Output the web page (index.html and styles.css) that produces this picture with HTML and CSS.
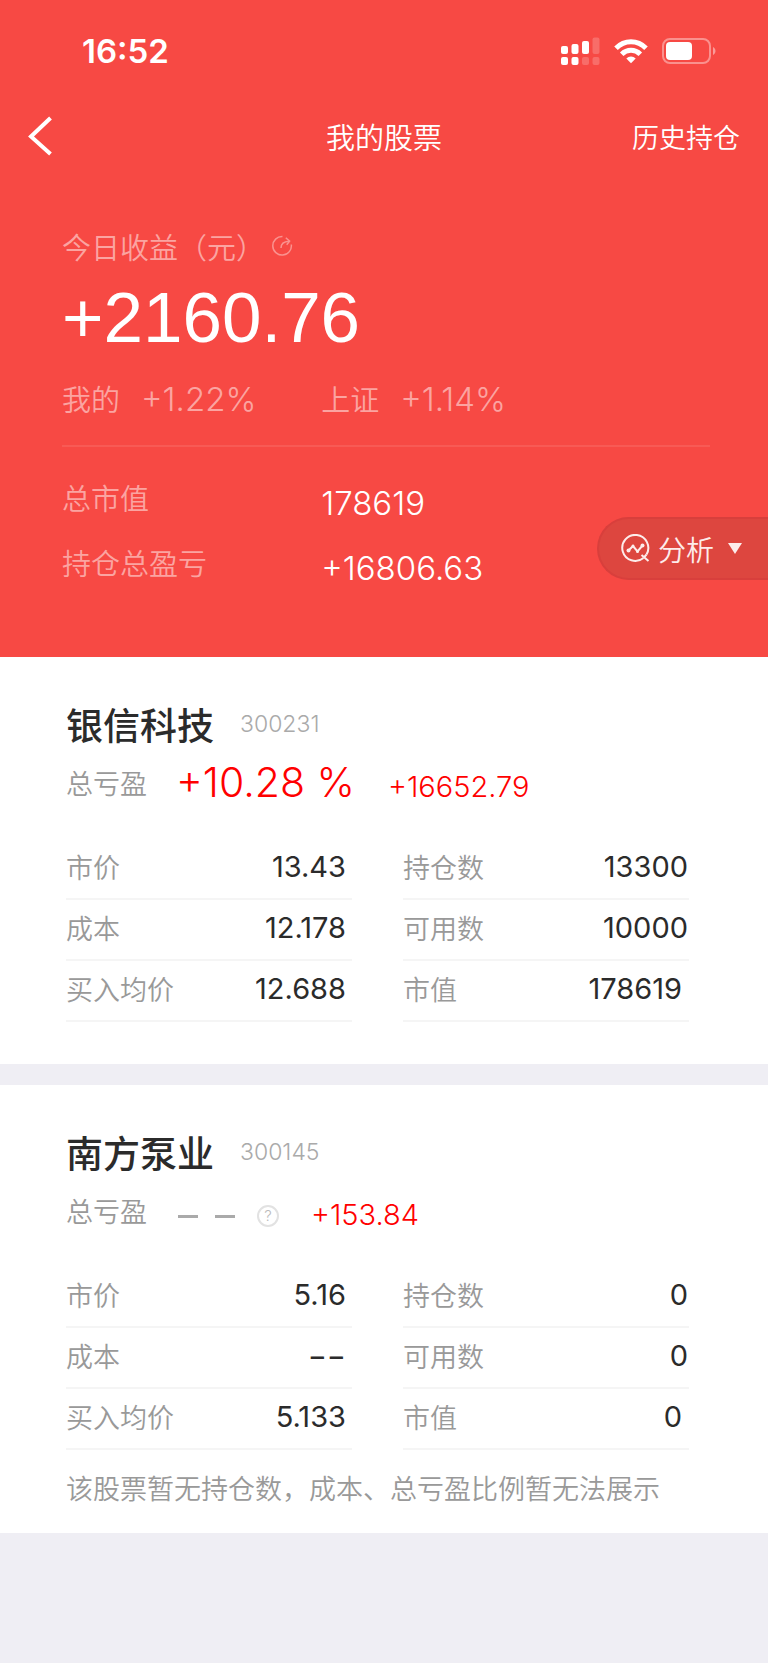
FILE: index.html
```html
<!DOCTYPE html>
<html lang="zh-CN">
<head>
    <meta charset="UTF-8">
    <meta name="viewport" content="width=device-width, initial-scale=1.0">
    <title>我的股票</title>
    <link rel="stylesheet" href="styles.css">
</head>
<body>
    <header class="header">
        <!-- Status bar -->
        <div class="status">
            <span class="time">16:52</span>
            <div class="status-icons">
                <svg width="39" height="28" viewBox="0 0 39 28" fill="#fff">
                    <rect x="0" y="9" width="7" height="8" rx="2"/>
                    <rect x="10.500" y="7" width="7" height="10" rx="2"/>
                    <rect x="21" y="4" width="7" height="13" rx="2"/>
                    <rect x="31.500" y="0.500" width="7" height="16.500" rx="2" opacity="0.200"/>
                    <rect x="0" y="20" width="7" height="8" rx="2"/>
                    <rect x="10.500" y="20" width="7" height="8" rx="2"/>
                    <rect x="21" y="20" width="7" height="8" rx="2" opacity="0.200"/>
                    <rect x="31.500" y="20" width="7" height="8" rx="2" opacity="0.200"/>
                </svg>
                <svg width="34" height="25" viewBox="0 0 34 25" fill="none" stroke="#fff" stroke-width="5">
                    <path d="M2 9.300C10.500 0.700 23.500 0.700 32 9.300"/>
                    <path d="M7.700 15.200C13 10 21 10 26.300 15.200"/>
                    <path d="M12.300 19.400C15 16.700 19 16.700 21.700 19.400L17 24.300Z" fill="#fff" stroke="none"/>
                </svg>
                <svg width="54" height="26" viewBox="0 0 54 26">
                    <rect x="1" y="1" width="47" height="24" rx="7" fill="none" stroke="#fff" stroke-width="2" opacity="0.400"/>
                    <rect x="4" y="4" width="26" height="18" rx="4" fill="#fff"/>
                    <path d="M51 9C54.300 10.500 54.300 15.500 51 17Z" fill="#fff" opacity="0.450"/>
                </svg>
            </div>
        </div>

        <nav class="nav">
            <button class="back" aria-label="返回">
                <svg width="24" height="40" viewBox="0 0 24 40" fill="none" stroke="#fff" stroke-width="4">
                    <path d="M22.500 2L3 20.500L22.500 38"/>
                </svg>
            </button>
            <h1 class="nav-title">我的股票</h1>
            <a class="history" href="#">历史持仓</a>
        </nav>

        <!-- Profit of the day and totals -->
        <section class="summary">
            <div class="today">
                <span>今日收益（元）</span>
                <button class="refresh" aria-label="刷新">
                    <svg width="22" height="22" viewBox="0 0 22 22" fill="none" stroke="#fff" stroke-width="1.500">
                        <path d="M11.500 1.500A9.300 9.300 0 1 0 20.300 9.500"/>
                        <path d="M10 13C10 9 12 6.500 18 6.200"/>
                        <path d="M14.800 2.800L18.600 6.100L15.700 9.700"/>
                    </svg>
                </button>
            </div>
            <div class="profit">+2160.76</div>
            <div class="columns compare">
                <div><span>我的</span><span class="rate">+1.22%</span></div>
                <div><span>上证</span><span class="rate">+1.14%</span></div>
            </div>
            <dl class="totals">
                <div class="columns">
                    <dt>总市值</dt>
                    <dd>178619</dd>
                </div>
                <div class="columns">
                    <dt>持仓总盈亏</dt>
                    <dd>+16806.63</dd>
                </div>
            </dl>
        </section>

        <!-- Floating tab on the right edge -->
        <button class="analysis">
            <svg width="29" height="29" viewBox="0 0 29 29" fill="none" stroke="#fdeceb" stroke-width="2">
                <path d="M22.500 24A13 13 0 1 1 25.500 20.500"/>
                <path d="M20.500 21L27.500 27M25.500 20.500L22.500 24"/>
                <path d="M7.500 16.500L12 12L16.500 17.500L21.500 11.500"/>
                <g fill="#fdeceb" stroke="none">
                    <circle cx="7.500" cy="16.500" r="2"/>
                    <circle cx="12" cy="12" r="1.500"/>
                    <circle cx="16.500" cy="17.500" r="1.500"/>
                    <circle cx="21.500" cy="11.500" r="2"/>
                </g>
            </svg>
            <span>分析</span>
            <svg class="arrow" width="14" height="11" viewBox="0 0 14 11" fill="#fdeceb">
                <path d="M0 0H14L7 11Z"/>
            </svg>
        </button>
    </header>

    <main>
        <article class="stock">
            <div class="stock-head">
                <h2 class="name">银信科技</h2>
                <span class="code">300231</span>
            </div>
            <div class="result">
                <span class="label">总亏盈</span>
                <span class="percent">+10.28 %</span>
                <span class="amount">+16652.79</span>
            </div>
            <dl class="details">
                <div class="item"><dt>市价</dt><dd>13.43</dd></div>
                <div class="item"><dt>持仓数</dt><dd>13300</dd></div>
                <div class="item"><dt>成本</dt><dd>12.178</dd></div>
                <div class="item"><dt>可用数</dt><dd>10000</dd></div>
                <div class="item"><dt>买入均价</dt><dd>12.688</dd></div>
                <div class="item value"><dt>市值</dt><dd>178619</dd></div>
            </dl>
        </article>

        <article class="stock">
            <div class="stock-head">
                <h2 class="name">南方泵业</h2>
                <span class="code">300145</span>
            </div>
            <div class="result">
                <span class="label">总亏盈</span>
                <span class="dashes" role="img" aria-label="暂无"></span>
                <button class="help" aria-label="说明">?</button>
                <span class="amount">+153.84</span>
            </div>
            <dl class="details">
                <div class="item"><dt>市价</dt><dd>5.16</dd></div>
                <div class="item"><dt>持仓数</dt><dd>0</dd></div>
                <div class="item"><dt>成本</dt><dd>−−</dd></div>
                <div class="item"><dt>可用数</dt><dd>0</dd></div>
                <div class="item"><dt>买入均价</dt><dd>5.133</dd></div>
                <div class="item value"><dt>市值</dt><dd>0</dd></div>
            </dl>
            <p class="note">该股票暂无持仓数，成本、总亏盈比例暂无法展示</p>
        </article>
    </main>
</body>
</html>
```
FILE: styles.css
```css
* {
    box-sizing: border-box;
}

body, h1, h2, dl, dd, p {
    margin: 0;
}

body {
    font-family: Inter, "Noto Sans CJK SC", sans-serif;
    font-weight: 350;
    background-color: #efeef4;
}

button {
    padding: 0;
    border: none;
    background: none;
    font: inherit;
    color: inherit;
    cursor: pointer;
}

svg {
    display: block;
    flex-shrink: 0;
}

/* Red header */
.header {
    position: relative;
    padding-bottom: 60px;
    background-color: #f74944;
    color: #fff;
}

.status {
    display: flex;
    justify-content: space-between;
    align-items: center;
    height: 102px;
    padding: 0 52px 0 82px;
}

.time {
    font-size: 33px;
    font-weight: 600;
}

.status-icons {
    display: flex;
    align-items: center;
    gap: 14px;
}

.nav {
    display: grid;
    grid-template-columns: 1fr auto 1fr;
    align-items: center;
    height: 68px;
    padding: 0 28px;
}

.back {
    justify-self: start;
}

.nav-title {
    font-size: 29px;
    font-weight: 350;
}

.history {
    justify-self: end;
    font-size: 27px;
    color: #fff;
    text-decoration: none;
}

.summary {
    padding: 56px 58px 0 62px;
}

.today {
    display: flex;
    align-items: center;
    gap: 6px;
    height: 40px;
    font-size: 29px;
    color: #fba4a1;
}

.refresh {
    opacity: 0.4;
}

.profit {
    margin-top: 12px;
    font-family: "Liberation Sans", Arial, sans-serif;
    font-size: 71px;
    font-weight: 400;
    line-height: 80px;
}

.columns {
    display: grid;
    grid-template-columns: 2fr 3fr;
}

.compare {
    margin-top: 21px;
    padding-bottom: 24px;
    border-bottom: 2px solid #f85a55;
    line-height: 40px;
    font-size: 29px;
    color: #fba4a1;
}

.rate {
    margin-left: 21px;
    font-size: 33px;
    font-weight: 300;
}

.totals {
    padding-top: 20px;
}

.totals .columns {
    height: 65px;
    line-height: 65px;
}

.totals dt {
    font-size: 29px;
    color: #fba4a1;
}

.totals dd {
    padding-top: 4px;
    font-size: 33px;
}

.analysis {
    position: absolute;
    right: 0;
    bottom: 77px;
    display: flex;
    align-items: center;
    gap: 8px;
    height: 63px;
    padding: 0 26px 0 22px;
    border: 2px solid #d83f3c;
    border-right: none;
    border-radius: 32px 0 0 32px;
    background-color: #dd463f;
    font-size: 28px;
    color: #fdeceb;
}

.arrow {
    margin-left: 6px;
}

/* Stock cards */
.stock {
    padding: 43px 79px 42px 66px;
    background-color: #fff;
}

.stock + .stock {
    margin-top: 21px;
    padding-bottom: 23px;
}

.stock-head {
    display: flex;
    align-items: center;
    gap: 26px;
    height: 48px;
}

.name {
    font-size: 37px;
    font-weight: 500;
    color: #2b2b2b;
}

.code {
    font-size: 23px;
    font-weight: 300;
    color: #aaa;
}

.result {
    display: flex;
    align-items: center;
    height: 68px;
    margin-bottom: 23px;
}

.label {
    margin-right: 29px;
    font-size: 27px;
    color: #999;
}

.percent {
    margin-right: 33px;
    font-size: 41px;
    color: #f00;
}

.amount {
    padding-top: 8px;
    font-size: 29px;
    color: #f00;
}

/* Placeholder for a missing percentage */
.dashes {
    width: 57px;
    height: 3px;
    margin: 12px 22px 0 2px;
    border: solid #aaa;
    border-width: 0 20px;
}

.help {
    width: 22px;
    height: 22px;
    margin: 12px 32px 0 0;
    border: 2px solid #e2e2e2;
    border-radius: 50%;
    font-size: 15px;
    line-height: 18px;
    color: #bbb;
}

.details {
    display: grid;
    grid-template-columns: 1fr 1fr;
    column-gap: 51px;
}

.item {
    display: flex;
    justify-content: space-between;
    align-items: center;
    height: 61px;
    padding: 0 6px 5px 0;
    border-bottom: 2px solid #f5f5f5;
}

.item:nth-child(even) {
    padding-right: 1px;
}

.item.value {
    padding-right: 7px;
}

.item dt {
    font-size: 27px;
    color: #999;
}

.item dd {
    font-size: 29px;
    font-weight: 400;
    color: #2b2b2b;
}

.note {
    padding-top: 20px;
    font-size: 27px;
    line-height: 40px;
    color: #999;
}
```
